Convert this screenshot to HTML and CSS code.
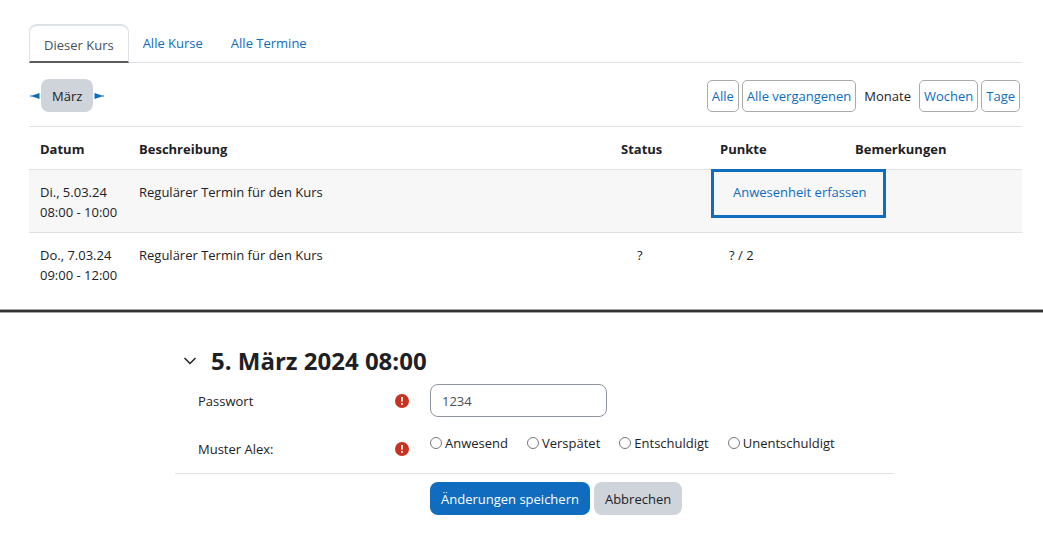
FILE: index.html
```html
<!DOCTYPE html>
<html lang="de">
<head>
<meta charset="utf-8">
<meta name="viewport" content="width=device-width, initial-scale=1">
<title>Anwesenheit</title>
<link rel="stylesheet" href="styles.css">
</head>
<body>
<main>
  <section class="sessions">
    <nav class="tabs">
      <a class="tab tab-active" href="#kurs">Dieser Kurs</a>
      <a class="tab" href="#kurse">Alle Kurse</a>
      <a class="tab" href="#termine">Alle Termine</a>
    </nav>
    <div class="toolbar">
      <div class="month-nav">
        <a class="arrow" href="#prev" aria-label="Vorheriger Monat"><svg width="10" height="6" viewBox="0 0 10 6"><path d="M0 2.500h2L9.500 0v6L2 3.500H0z" fill="currentColor"/></svg></a>
        <button class="btn btn-secondary" type="button">März</button>
        <a class="arrow" href="#next" aria-label="Nächster Monat"><svg width="10" height="6" viewBox="0 0 10 6"><path d="M10 2.500H8L.5 0v6L8 3.500h2z" fill="currentColor"/></svg></a>
      </div>
      <div class="views">
        <a class="view" href="#alle">Alle</a>
        <a class="view" href="#vergangene">Alle vergangenen</a>
        <span class="view-current">Monate</span>
        <a class="view" href="#wochen">Wochen</a>
        <a class="view" href="#tage">Tage</a>
      </div>
    </div>
    <table class="session-table">
      <colgroup><col class="col-date"><col><col class="col-status"><col class="col-points"><col class="col-notes"></colgroup>
      <thead>
        <tr><th scope="col">Datum</th><th scope="col">Beschreibung</th><th scope="col">Status</th><th scope="col">Punkte</th><th scope="col">Bemerkungen</th></tr>
      </thead>
      <tbody>
        <tr class="shaded"><td>Di., 5.03.24<br>08:00 - 10:00</td><td>Regulärer Termin für den Kurs</td><td></td><td class="record" colspan="2"><a class="record-link" href="#erfassen">Anwesenheit erfassen</a></td></tr>
        <tr><td>Do., 7.03.24<br>09:00 - 12:00</td><td>Regulärer Termin für den Kurs</td><td class="status">?</td><td class="points">? / 2</td><td></td></tr>
      </tbody>
    </table>
  </section>
  <hr class="divider">
  <form class="attendance">
    <h2 class="heading">
      <svg width="14" height="8" viewBox="0 0 14 8" aria-hidden="true"><path d="M1.500 1L7 6.500 12.500 1" fill="none" stroke="currentColor" stroke-width="1.500"/></svg>
      5. März 2024 08:00
    </h2>
    <div class="row row-password">
      <div class="row-label"><label for="pw">Passwort</label>
        <svg width="14" height="14" viewBox="0 0 14 14" role="img" aria-label="Erforderlich"><circle cx="7" cy="7" r="7" fill="#ca3120"/><path d="M6 3h2l-.3 4.800H6.300zM6.100 9h1.800v1.700H6.100z" fill="#fff"/></svg></div>
      <input class="text-input" id="pw" type="text" value="1234">
    </div>
    <div class="row">
      <div class="row-label" id="student"><span>Muster Alex:</span>
        <svg width="14" height="14" viewBox="0 0 14 14" role="img" aria-label="Erforderlich"><circle cx="7" cy="7" r="7" fill="#ca3120"/><path d="M6 3h2l-.3 4.800H6.300zM6.100 9h1.800v1.700H6.100z" fill="#fff"/></svg></div>
      <div class="options" role="radiogroup" aria-labelledby="student">
        <label class="option"><input type="radio" name="status">Anwesend</label>
        <label class="option"><input type="radio" name="status">Verspätet</label>
        <label class="option"><input type="radio" name="status">Entschuldigt</label>
        <label class="option"><input type="radio" name="status">Unentschuldigt</label>
      </div>
    </div>
    <div class="actions">
      <button class="btn btn-primary" type="submit">Änderungen speichern</button>
      <button class="btn btn-secondary" type="button">Abbrechen</button>
    </div>
  </form>
</main>
</body>
</html>
```

FILE: styles.css
```css
* { box-sizing: border-box; }
body {
  margin: 0;
  background: #fff;
  color: #1d2125;
  font: 13px/20px "Open Sans", "Noto Sans", sans-serif;
}
a { color: #0f6cbf; text-decoration: none; }
svg { display: block; flex: none; }

.sessions { padding: 24px 21px 14px 29px; }
.tabs { display: flex; border-bottom: 1px solid #dee2e6; }
.tab {
  height: 39px;
  margin-bottom: -1px;
  padding: 9px 14px;
  border-radius: 8px 8px 0 0;
}
.tab-active {
  border: 1px solid #dee2e6;
  border-top-width: 2px;
  border-bottom: 2px solid #5b5b5b;
  background: #fff;
  color: #495057;
}

.toolbar {
  display: flex;
  justify-content: space-between;
  align-items: center;
  padding: 16px 2px 14px 1px;
}
.month-nav, .views { display: flex; align-items: center; }
.month-nav { gap: 1px; }
.btn {
  height: 33px;
  padding: 0 11px;
  border: 0;
  border-radius: 8px;
  font: inherit;
}
.btn-primary { background: #0f6cbf; color: #fff; }
.btn-secondary { background: #ced4da; color: #1d2125; }
.views { gap: 3px; }
.view {
  padding: 5px 4px;
  border: 1px solid #aaa;
  border-radius: 5px;
}
.view-current { padding: 0 5px; }

.session-table { width: 100%; table-layout: fixed; border-spacing: 0; }
.col-date { width: 99px; }
.col-status { width: 99px; }
.col-points { width: 135px; }
.col-notes { width: 178px; }
.session-table th, .session-table td {
  padding: 12px 0 10px 11px;
  border-top: 1px solid #dee2e6;
  text-align: left;
  vertical-align: top;
}
.shaded { background: #f7f7f7; }
.session-table .status { padding-left: 27px; }
.session-table .points { padding-left: 20px; }
.session-table .record { padding-left: 24px; }
.record-link { position: relative; }
.record-link::after {
  content: "";
  position: absolute;
  inset: -14px -20px -17px -22px;
  border: 3px solid #0f6cbf;
}

.divider {
  height: 4px;
  margin: 0;
  border: 1px solid #a5a5a5;
  border-width: 1px 0;
  background: #333;
}

.attendance { max-width: 894px; padding: 32px 0 32px 175px; }
.heading {
  display: flex;
  align-items: center;
  gap: 14px;
  margin: 0 0 7px;
  padding-left: 8px;
  font-size: 24px;
  line-height: 32px;
}
.row {
  display: grid;
  grid-template-columns: 234px 1fr;
  column-gap: 21px;
  padding-bottom: 8px;
}
.row-label {
  display: flex;
  justify-content: space-between;
  align-items: center;
  padding-left: 23px;
}
.text-input {
  width: 177px;
  height: 33px;
  padding: 0 11px;
  border: 1px solid #8f959e;
  border-radius: 8px;
  background: #fff;
  color: #495057;
  font: inherit;
}
.row-password { padding-bottom: 16px; }
.options { display: flex; gap: 19px; padding-bottom: 12px; }
.option { display: flex; align-items: center; gap: 3px; }
.option input { width: 12px; height: 12px; margin: 0; }
.actions {
  display: flex;
  gap: 4px;
  padding: 8px 0 0 255px;
  border-top: 1px solid #dee2e6;
}
```
